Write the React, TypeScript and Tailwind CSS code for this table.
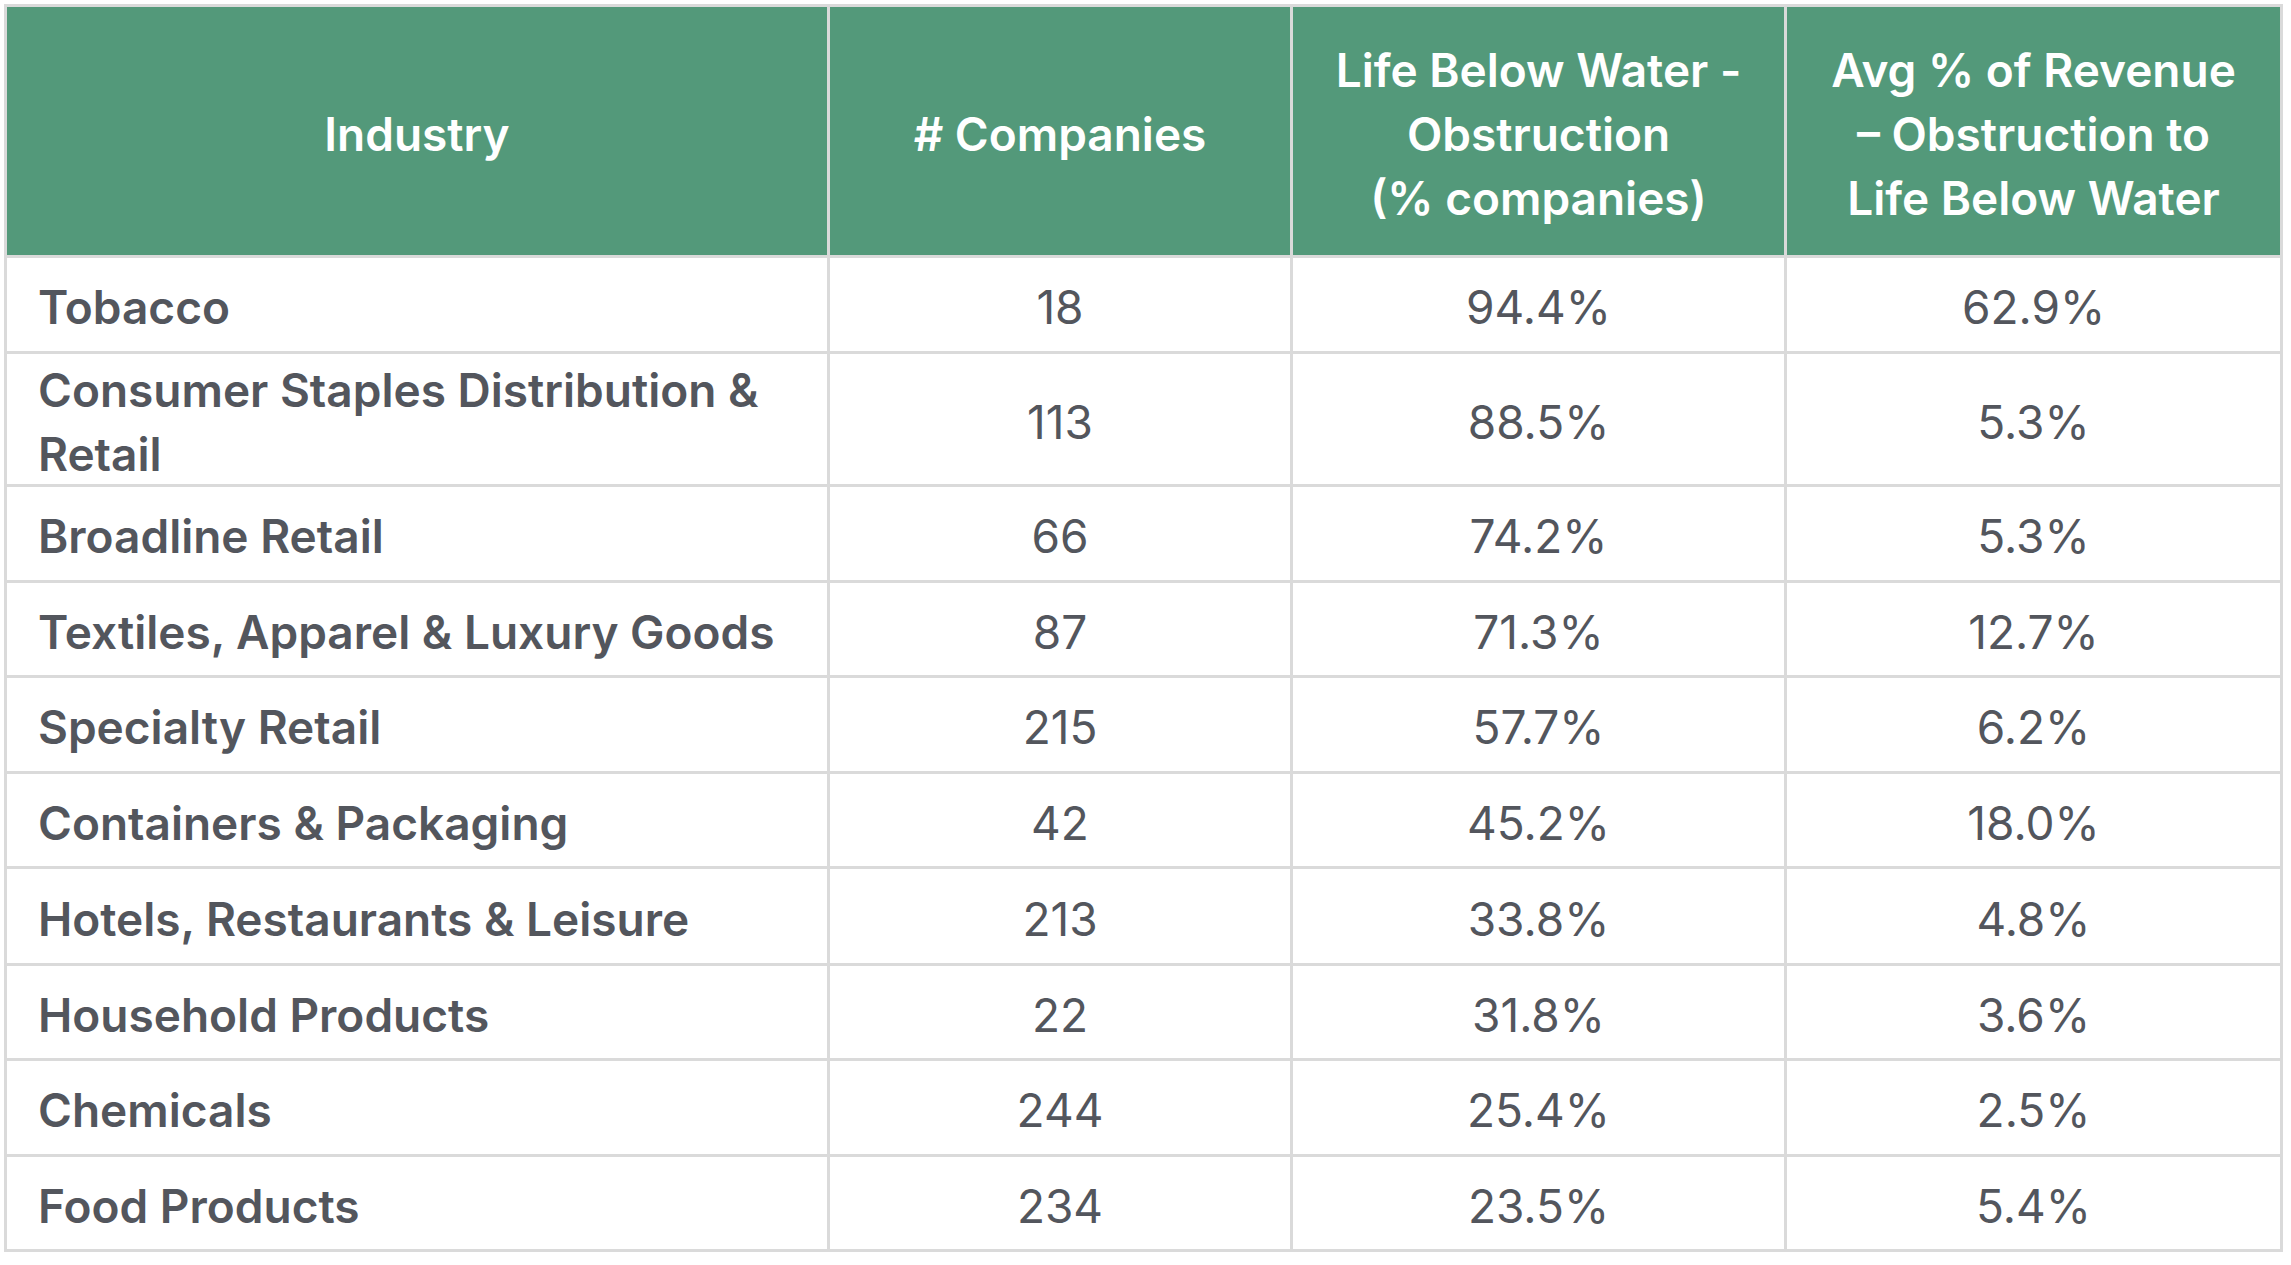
import React from "react";

const rows: [string, string, string, string][] = [
  ["Tobacco", "18", "94.4%", "62.9%"],
  ["Consumer Staples Distribution & Retail", "113", "88.5%", "5.3%"],
  ["Broadline Retail", "66", "74.2%", "5.3%"],
  ["Textiles, Apparel & Luxury Goods", "87", "71.3%", "12.7%"],
  ["Specialty Retail", "215", "57.7%", "6.2%"],
  ["Containers & Packaging", "42", "45.2%", "18.0%"],
  ["Hotels, Restaurants & Leisure", "213", "33.8%", "4.8%"],
  ["Household Products", "22", "31.8%", "3.6%"],
  ["Chemicals", "244", "25.4%", "2.5%"],
  ["Food Products", "234", "23.5%", "5.4%"],
];

export default function App() {
  return (
    <div className="w-[2291px] h-[1265px] bg-white pl-[4px] pt-[4px]" style={{ fontFamily: "Inter, 'Noto Sans', sans-serif" }}>
      <div className="grid w-[2279px] bg-[#dadada] p-[3px] gap-[3px] grid-cols-[820px_460px_491px_493px] grid-rows-[248px_93px_130px_93px_92px_93px_92px_94px_92px_93px_92px]">
        <div className="bg-[#53997a] text-white font-semibold text-[46px] leading-[64px] flex items-center justify-center text-center pt-[5px]">Industry</div>
        <div className="bg-[#53997a] text-white font-semibold text-[46px] leading-[64px] flex items-center justify-center text-center pt-[5px]"># Companies</div>
        <div className="bg-[#53997a] text-white font-semibold text-[46px] leading-[64px] flex items-center justify-center text-center pt-[5px]">
          <span>Life Below Water -<br />Obstruction<br />(% companies)</span>
        </div>
        <div className="bg-[#53997a] text-white font-semibold text-[46px] leading-[64px] flex items-center justify-center text-center pt-[5px]">
          <span>Avg % of Revenue<br />– Obstruction to<br />Life Below Water</span>
        </div>
        {rows.map((r) => (
          <React.Fragment key={r[0]}>
            <div className="bg-white text-[#53565d] font-semibold text-[46px] leading-[64px] flex items-center pl-[31px] pr-[40px] pt-[5px]">{r[0]}</div>
            <div className="bg-white text-[#53565d] text-[46px] leading-[64px] flex items-center justify-center pt-[5px]">{r[1]}</div>
            <div className="bg-white text-[#53565d] text-[46px] leading-[64px] flex items-center justify-center pt-[5px]">{r[2]}</div>
            <div className="bg-white text-[#53565d] text-[46px] leading-[64px] flex items-center justify-center pt-[5px]">{r[3]}</div>
          </React.Fragment>
        ))}
      </div>
    </div>
  );
}
